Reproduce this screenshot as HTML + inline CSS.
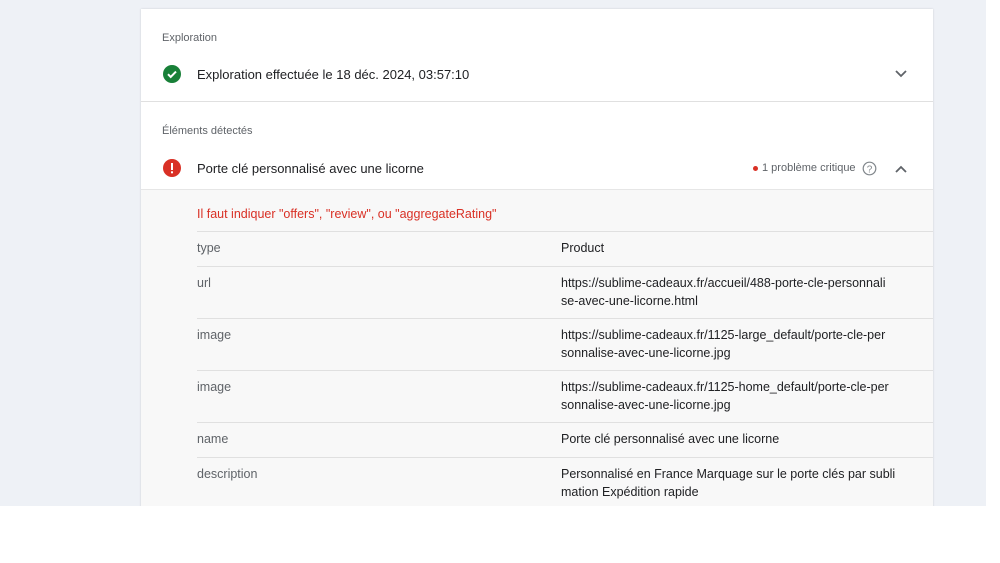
<!DOCTYPE html><html><head><meta charset="utf-8"><style>
*{margin:0;padding:0;box-sizing:border-box}
body{width:1000px;height:563px;background:#fff;font-family:"Liberation Sans",Arial,sans-serif;position:relative;overflow:hidden}
#bg{position:absolute;left:0;top:0;width:986px;height:506px;background:#eef1f6;overflow:hidden}
#card{position:absolute;left:141px;top:9px;width:792px;height:520px;background:#fff;box-shadow:0 0 2px rgba(0,0,0,.15)}
.a{position:absolute;white-space:nowrap}
.lbl{font-size:11px;color:#5f6368}
.t{font-size:13px;color:#202124}
.k{font-size:12.5px;color:#5f6368;left:56px}
.v{font-size:12.5px;color:#202124;left:420px;line-height:18px}
.hr{position:absolute;height:1px;background:#e0e0e0}
</style></head><body><div id="bg"><div id="card">
<div class="a lbl" style="left:21px;top:23px">Exploration</div>
<svg class="a" style="left:22px;top:56px" width="18" height="18" viewBox="0 0 18 18"><circle cx="9" cy="9" r="9" fill="#188038"/><path d="M5 9.2l2.7 2.7L13 6.6" stroke="#fff" stroke-width="2" fill="none"/></svg>
<div class="a t" style="left:56px;top:58px">Exploration effectuée le 18 déc. 2024, 03:57:10</div>
<svg class="a" style="left:754px;top:61px" width="12" height="8"><path d="M1 1l5 5 5-5" stroke="#5f6368" stroke-width="1.8" fill="none"/></svg>
<div class="hr" style="left:0;top:92px;width:792px"></div>
<div class="a lbl" style="left:21px;top:116px">Éléments détectés</div>
<svg class="a" style="left:22px;top:150px" width="18" height="18"><circle cx="9" cy="9" r="9" fill="#d93025"/><rect x="8" y="4" width="2" height="7" fill="#fff"/><rect x="8" y="12.3" width="2" height="2" fill="#fff"/></svg>
<div class="a t" style="left:56px;top:152px">Porte clé personnalisé avec une licorne</div>
<div class="a" style="left:612px;top:157px;width:5px;height:5px;border-radius:50%;background:#d93025"></div>
<div class="a" style="left:621px;top:153px;font-size:11px;color:#5f6368">1 problème critique</div>
<svg class="a" style="left:721px;top:152px" width="15" height="15"><circle cx="7.5" cy="7.5" r="6.3" stroke="#80868b" stroke-width="1.2" fill="none"/><text x="7.5" y="11.3" font-size="10" fill="#80868b" text-anchor="middle" font-family="Liberation Sans">?</text></svg>
<svg class="a" style="left:754px;top:156px" width="12" height="8"><path d="M1 7l5-5 5 5" stroke="#5f6368" stroke-width="1.8" fill="none"/></svg>
<div class="a" style="left:0;top:180px;width:792px;height:340px;background:#f8f8f8;border-top:1px solid #e6e6e6"></div>
<div class="a" style="left:56px;top:198px;font-size:12.5px;color:#d93025">Il faut indiquer "offers", "review", ou "aggregateRating"</div>
<div class="hr" style="left:56px;top:222px;width:736px"></div>
<div class="a k" style="top:232px">type</div><div class="a v" style="top:230px">Product</div>
<div class="hr" style="left:56px;top:257px;width:736px"></div>
<div class="a k" style="top:267px">url</div><div class="a v" style="top:265px">https://sublime-cadeaux.fr/accueil/488-porte-cle-personnali<br>se-avec-une-licorne.html</div>
<div class="hr" style="left:56px;top:309px;width:736px"></div>
<div class="a k" style="top:319px">image</div><div class="a v" style="top:317px">https://sublime-cadeaux.fr/1125-large_default/porte-cle-per<br>sonnalise-avec-une-licorne.jpg</div>
<div class="hr" style="left:56px;top:361px;width:736px"></div>
<div class="a k" style="top:371px">image</div><div class="a v" style="top:369px">https://sublime-cadeaux.fr/1125-home_default/porte-cle-per<br>sonnalise-avec-une-licorne.jpg</div>
<div class="hr" style="left:56px;top:413px;width:736px"></div>
<div class="a k" style="top:423px">name</div><div class="a v" style="top:421px">Porte clé personnalisé avec une licorne</div>
<div class="hr" style="left:56px;top:448px;width:736px"></div>
<div class="a k" style="top:458px">description</div><div class="a v" style="top:456px">Personnalisé en France Marquage sur le porte clés par subli<br>mation Expédition rapide</div>
</div></div></body></html>
